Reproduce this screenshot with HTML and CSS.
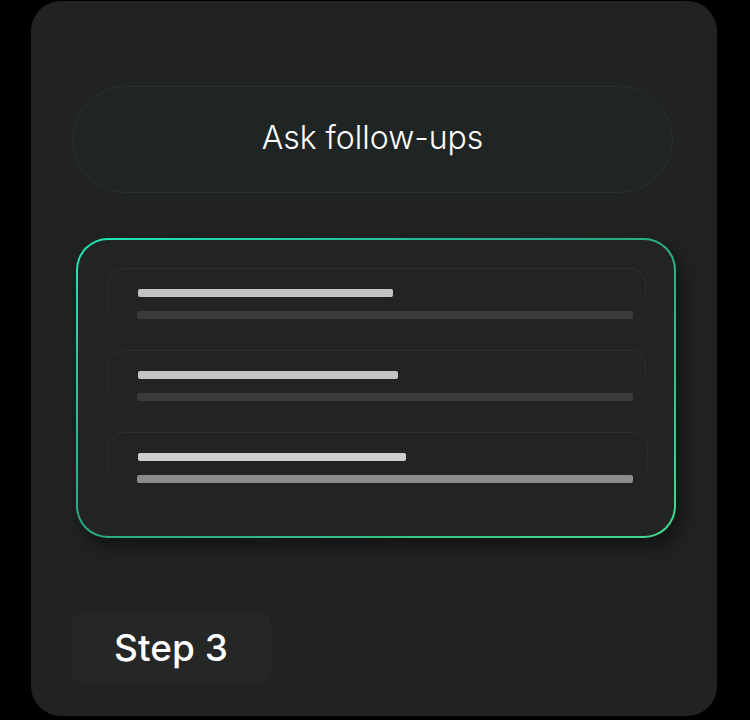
FILE: index.html
```html
<!DOCTYPE html>
<html lang="en">
<head>
    <meta charset="UTF-8">
    <meta name="viewport" content="width=device-width, initial-scale=1.0">
    <title>Step 3 - Ask follow-ups</title>
    <link rel="stylesheet" href="styles.css">
</head>
<body>
    <div class="card">
        <div class="pill">Ask follow-ups</div>

        <div class="panel">
            <div class="item">
                <div class="bar title" style="width: 255px;"></div>
                <div class="bar sub"></div>
            </div>
            <div class="item">
                <div class="bar title" style="width: 260px;"></div>
                <div class="bar sub"></div>
            </div>
            <div class="item active">
                <div class="bar title" style="width: 268px;"></div>
                <div class="bar sub"></div>
            </div>
        </div>

        <div class="step">Step 3</div>
    </div>
</body>
</html>
```

FILE: styles.css
```css
body {
    margin: 0;
    background: #000;
    font-family: 'Inter', 'Noto Sans', sans-serif;
    color: #fff;
}
.card {
    box-sizing: border-box;
    width: 686px;
    height: 715px;
    margin: 1px 0 0 31px;
    padding: 85px 0 0 41px;
    background: #212322;
    border-radius: 30px;
    display: flex;
    flex-direction: column;
    align-items: flex-start;
}
.pill {
    box-sizing: border-box;
    width: 601px;
    height: 107px;
    padding-bottom: 5px;
    display: flex;
    align-items: center;
    justify-content: center;
    background: #1f2524;
    border: 1px solid #263030;
    border-radius: 54px;
    font-size: 32px;
    font-weight: 300;
}
.panel {
    box-sizing: border-box;
    width: 600px;
    height: 300px;
    margin: 45px 0 0 4px;
    padding: 28px 28px 0 30px;
    border: 2px solid transparent;
    border-radius: 32px;
    background:
        linear-gradient(#222423, #222423) padding-box,
        linear-gradient(150deg, #1ee8b5 0%, #2aa887 45%, #2bb584 60%, #42dc8f 100%) border-box;
    box-shadow: 6px 10px 18px rgba(0, 0, 0, 0.45);
    display: flex;
    flex-direction: column;
    gap: 2px;
}
.item {
    box-sizing: border-box;
    height: 80px;
    padding: 20px 12px 0 28px;
    border: 1px solid transparent;
    border-radius: 16px;
    background:
        linear-gradient(#222423, #222423) padding-box,
        linear-gradient(to bottom, #2d2f2f 0%, #262828 55%, rgba(34, 36, 35, 0) 100%) border-box;
}
.item.active {
    margin-right: -2px;
}
.bar {
    height: 8px;
    border-radius: 2px;
}
.bar.title {
    margin-left: 1px;
    background: #c4c4c4;
}
.bar.sub {
    margin-top: 14px;
    background: #3a3a3a;
}
.item.active .bar.title {
    background: #cfcfcf;
}
.item.active .bar.sub {
    background: #8c8c8c;
    margin-right: 2px;
}
.step {
    box-sizing: border-box;
    width: 200px;
    height: 71px;
    margin: 74px 0 0 -1px;
    display: flex;
    align-items: center;
    justify-content: center;
    background: #252726;
    border-radius: 12px;
    font-size: 37px;
    font-weight: 500;
}
```
